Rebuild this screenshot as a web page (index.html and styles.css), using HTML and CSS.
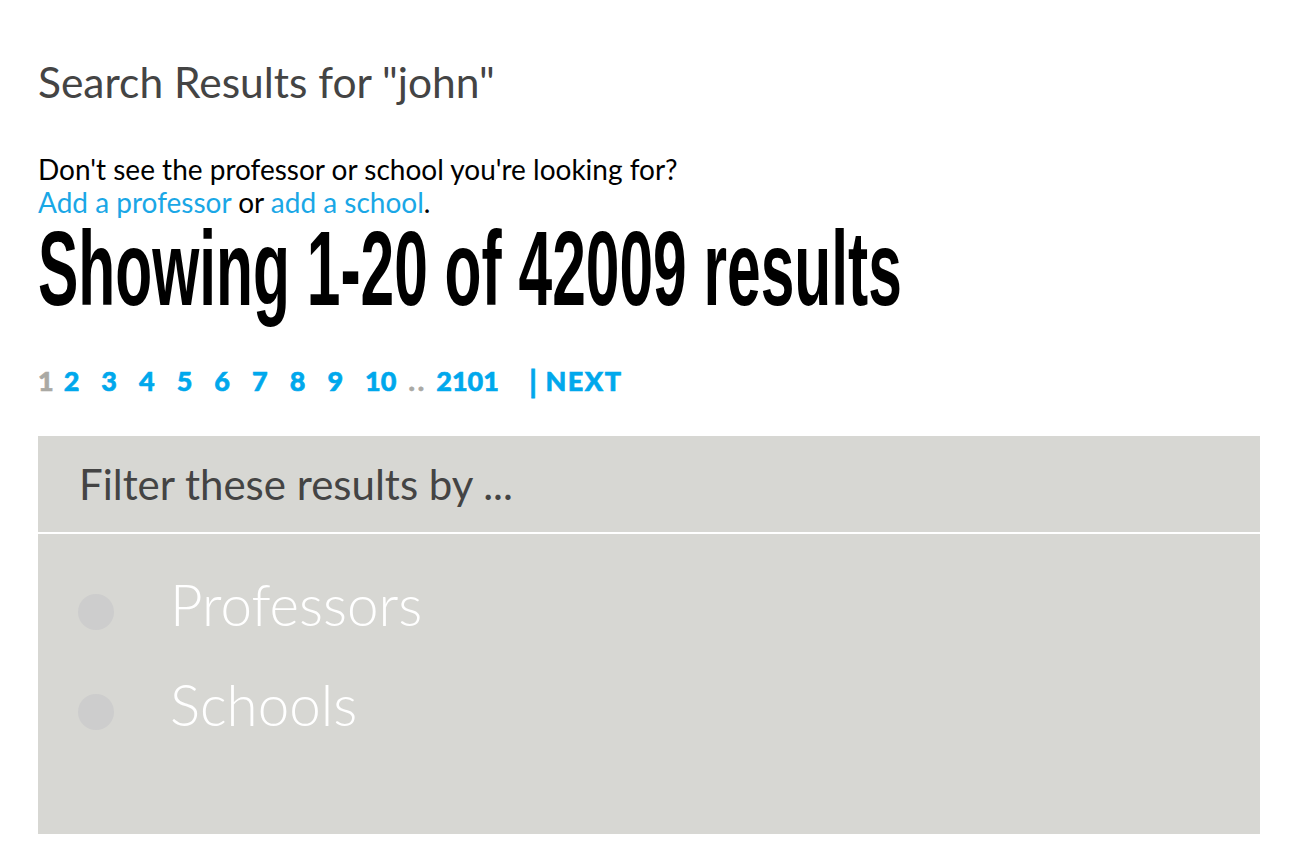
FILE: index.html
```html
<!DOCTYPE html>
<html lang="en">
<head>
<meta charset="utf-8">
<title>Search Results</title>
<link rel="stylesheet" href="styles.css">
</head>
<body>
<main class="page">
  <h1 class="search-title">Search Results for "john"</h1>
  <p class="hint">Don't see the professor or school you're looking for?<br><a href="#">Add a professor</a> or <a href="#">add a school</a>.</p>
  <h2 class="result-count"><span class="condensed">Showing 1-20 of 42009 results</span></h2>
  <nav class="pager">
    <span class="current">1</span>
    <a href="#">2</a>
    <a href="#">3</a>
    <a href="#">4</a>
    <a href="#">5</a>
    <a href="#">6</a>
    <a href="#">7</a>
    <a href="#">8</a>
    <a href="#">9</a>
    <a href="#">10</a>
    <span class="dots">..</span>
    <a href="#">2101</a>
    <a href="#" class="next"><span class="bar">|</span>NEXT</a>
  </nav>
  <section class="filter">
    <div class="filter-head">Filter these results by ...</div>
    <ul class="filter-options">
      <li class="option"><span class="radio"></span><span class="label">Professors</span></li>
      <li class="option"><span class="radio"></span><span class="label">Schools</span></li>
    </ul>
  </section>
</main>
</body>
</html>
```
FILE: styles.css
```css
html, body {
  margin: 0;
  padding: 0;
  background: #fff;
}
body {
  font-family: Lato, "Open Sans", sans-serif;
  color: #000;
}
.page {
  padding: 58px 36px 0 38px;
}
.search-title {
  margin: 0;
  font-size: 42.5px;
  line-height: 48px;
  font-weight: 400;
  color: #444;
}
.hint {
  margin: 47px 0 0;
  font-size: 28px;
  line-height: 33px;
  color: #000;
}
.hint a {
  color: #1aa7e6;
  text-decoration: none;
}
.result-count {
  margin: 0;
  height: 100px;
  font-family: "Liberation Sans", Arial, sans-serif;
  font-weight: 700;
  font-size: 105px;
  line-height: 100px;
  white-space: nowrap;
}
.condensed {
  display: inline-block;
  transform: scaleX(0.576);
  transform-origin: 0 0;
  margin-right: -636px;
}
.pager {
  margin-top: 45px;
  height: 30px;
  display: flex;
  align-items: baseline;
  font-size: 27px;
  line-height: 30px;
  font-weight: 900;
  -webkit-text-stroke: 0.6px currentColor;
}
.pager a {
  color: #00a8ec;
  text-decoration: none;
  margin-right: 22px;
}
.pager .current {
  color: #aaa9a4;
  margin-right: 10px;
}
.pager .dots {
  color: #aaa9a4;
  letter-spacing: 3px;
  margin: 0 9px 0 -10px;
}
.pager .next {
  margin-left: 8px;
  letter-spacing: 1.5px;
}
.pager .bar {
  display: inline-block;
  font-size: 31px;
  line-height: 30px;
  font-weight: 700;
  -webkit-text-stroke: 0.8px currentColor;
  transform: translateY(2px);
  margin-right: 7px;
}
.filter {
  margin-top: 42px;
  background: #d7d7d3;
}
.filter-head {
  height: 96px;
  line-height: 96px;
  padding-left: 41px;
  font-size: 42px;
  color: #444;
  border-bottom: 2px solid #fff;
}
.filter-options {
  list-style: none;
  margin: 0;
  padding: 20px 0 80px 40px;
}
.option {
  display: flex;
  align-items: flex-start;
  height: 100px;
}
.radio {
  width: 36px;
  height: 36px;
  border-radius: 50%;
  background: #cdcdcd;
  margin-top: 40px;
  flex: none;
}
.label {
  margin-left: 56px;
  font-size: 56.5px;
  line-height: 100px;
  font-weight: 300;
  color: #fff;
}
```
